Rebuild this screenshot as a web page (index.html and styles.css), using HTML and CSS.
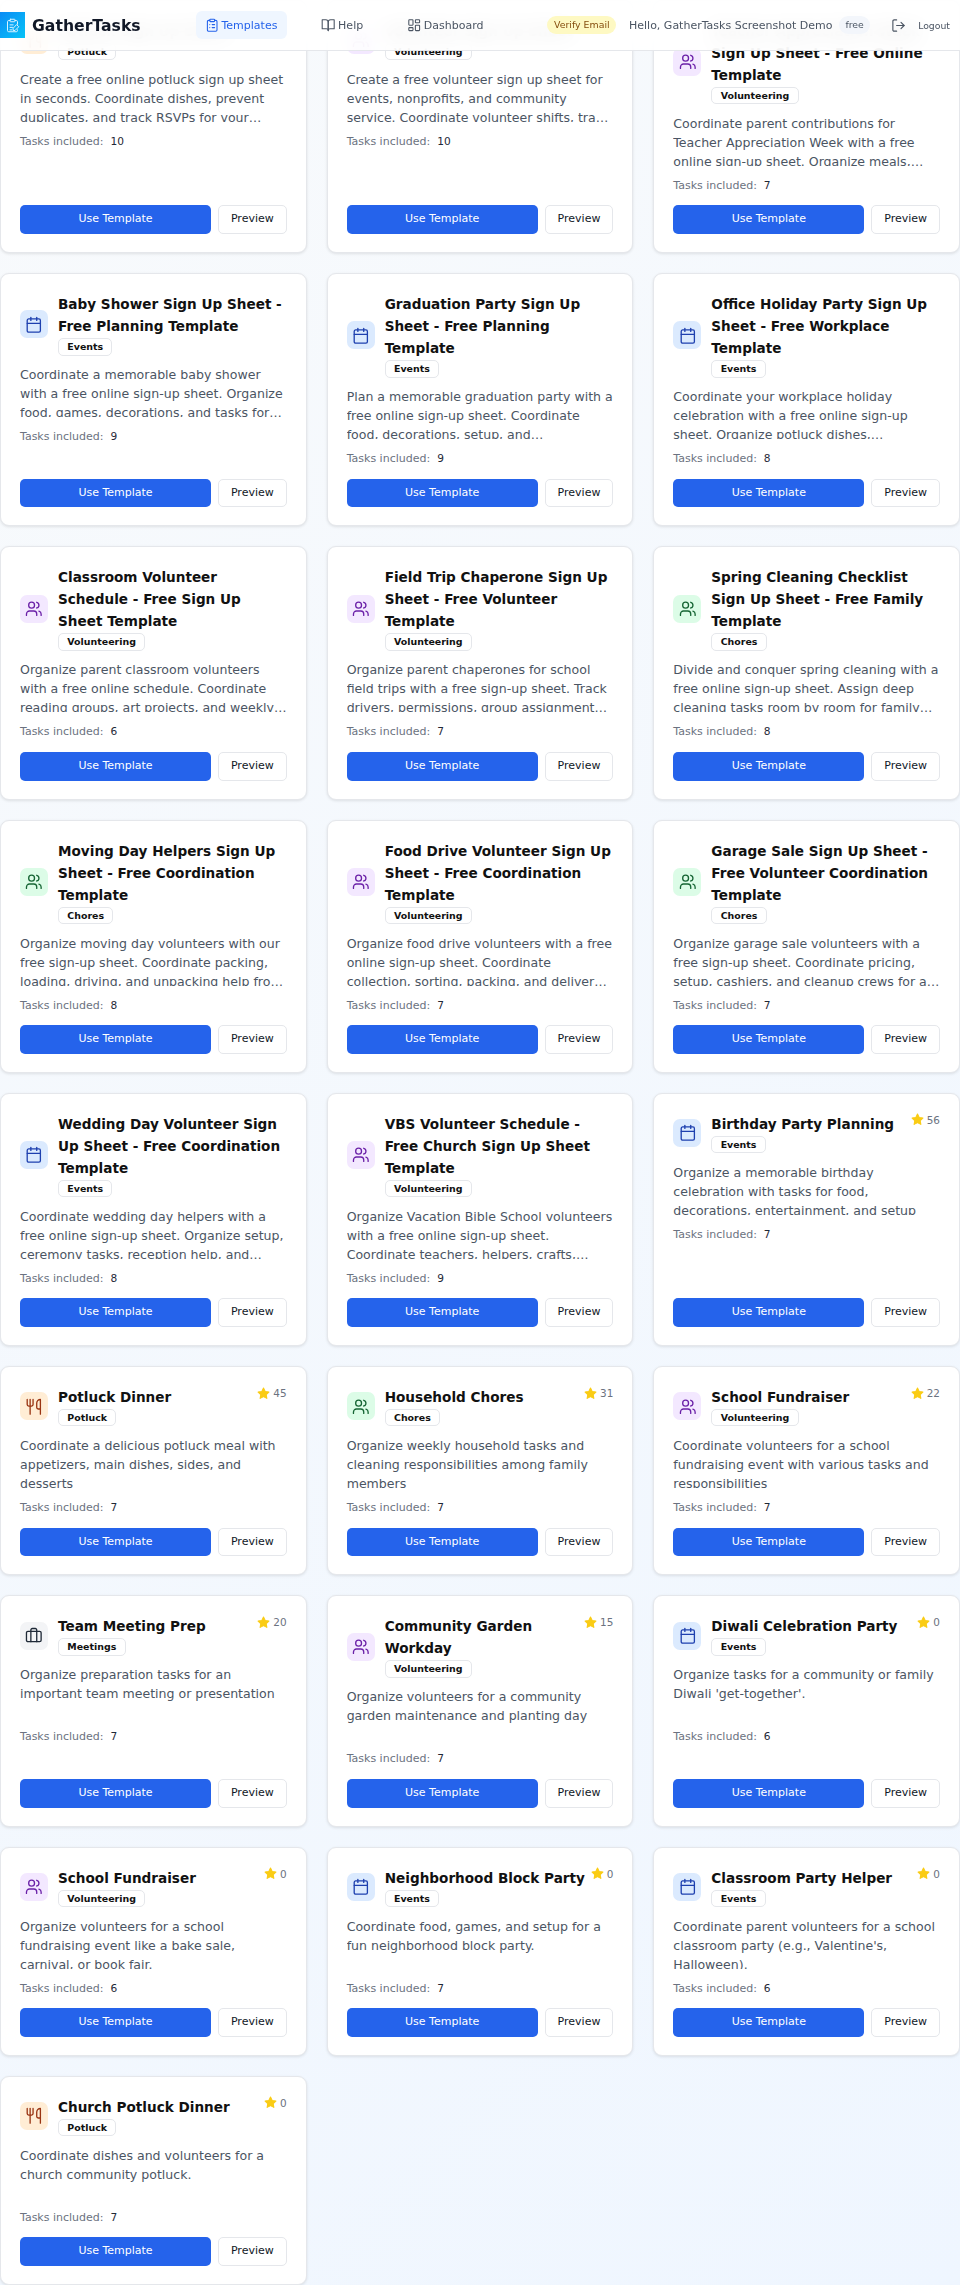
FILE: index.html
```html
<!DOCTYPE html>
<html>
<head>
    <meta charset="UTF-8">
    <title>GatherTasks Templates</title>
    <link rel="stylesheet" href="styles.css">
</head>
<body>
<svg class="defs" width="0" height="0">
    <symbol id="i-clipboard" viewBox="0 0 24 24"><rect width="8" height="4" x="8" y="2" rx="1"/><path d="M16 4h2a2 2 0 0 1 2 2v14a2 2 0 0 1-2 2H6a2 2 0 0 1-2-2V6a2 2 0 0 1 2-2h2"/><path d="M12 11h4"/><path d="M12 16h4"/><path d="M8 11h.01"/><path d="M8 16h.01"/></symbol>
    <symbol id="i-book" viewBox="0 0 24 24"><path d="M2 3h6a4 4 0 0 1 4 4v14a3 3 0 0 0-3-3H2z"/><path d="M22 3h-6a4 4 0 0 0-4 4v14a3 3 0 0 1 3-3h7z"/></symbol>
    <symbol id="i-dash" viewBox="0 0 24 24"><rect width="7" height="9" x="3" y="3" rx="1"/><rect width="7" height="5" x="14" y="3" rx="1"/><rect width="7" height="9" x="14" y="12" rx="1"/><rect width="7" height="5" x="3" y="16" rx="1"/></symbol>
    <symbol id="i-logout" viewBox="0 0 24 24"><path d="M9 21H5a2 2 0 0 1-2-2V5a2 2 0 0 1 2-2h4"/><polyline points="16 17 21 12 16 7"/><line x1="21" x2="9" y1="12" y2="12"/></symbol>
    <symbol id="i-calendar" viewBox="0 0 24 24"><path d="M8 2v4"/><path d="M16 2v4"/><rect width="18" height="18" x="3" y="4" rx="2"/><path d="M3 10h18"/></symbol>
    <symbol id="i-users" viewBox="0 0 24 24"><path d="M16 21v-2a4 4 0 0 0-4-4H6a4 4 0 0 0-4 4v2"/><circle cx="9" cy="7" r="4"/><path d="M22 21v-2a4 4 0 0 0-3-3.87"/><path d="M16 3.13a4 4 0 0 1 0 7.75"/></symbol>
    <symbol id="i-utensils" viewBox="0 0 24 24"><path d="M3 2v7c0 1.1.9 2 2 2h4a2 2 0 0 0 2-2V2"/><path d="M7 2v20"/><path d="M21 15V2a5 5 0 0 0-5 5v6c0 1.1.9 2 2 2h3Zm0 0v7"/></symbol>
    <symbol id="i-briefcase" viewBox="0 0 24 24"><path d="M16 20V4a2 2 0 0 0-2-2h-4a2 2 0 0 0-2 2v16"/><rect width="20" height="14" x="2" y="6" rx="2"/></symbol>
    <symbol id="i-star" viewBox="0 0 24 24"><polygon points="12 2 15.09 8.26 22 9.27 17 14.14 18.18 21.02 12 17.77 5.82 21.02 7 14.14 2 9.27 8.91 8.26 12 2"/></symbol>
</svg>

<header class="topbar">
    <a class="brand" href="#">
        <span class="brandMark">
            <svg viewBox="0 0 24 24"><rect x="8" y="2" width="8" height="4" rx="1"/><path d="M16 4h2a2 2 0 0 1 2 2v4"/><path d="M8 4H6a2 2 0 0 0-2 2v14a2 2 0 0 0 2 2h12a2 2 0 0 0 2-2v-1"/><path d="M8 11h5"/><path d="M8 15h4"/><path d="M8 19h3"/><path d="M19 11l3 3-6 6h-3v-3z"/></svg>
        </span>
        <span class="brandName">GatherTasks</span>
    </a>
    <nav class="nav">
        <a class="navLink active" href="#"><svg class="icon"><use href="#i-clipboard"/></svg>Templates</a>
        <a class="navLink" href="#"><svg class="icon"><use href="#i-book"/></svg>Help</a>
        <a class="navLink" href="#"><svg class="icon"><use href="#i-dash"/></svg>Dashboard</a>
    </nav>
    <div class="account">
        <a class="verify" href="#">Verify Email</a>
        <span class="hello">Hello, GatherTasks Screenshot Demo</span>
        <span class="plan">free</span>
        <a class="logout" href="#"><svg class="icon"><use href="#i-logout"/></svg><span>Logout</span></a>
    </div>
</header>

<main class="grid">
    <article class="card">
        <div class="cardHead">
            <span class="cardIcon potluck"><svg class="icon"><use href="#i-utensils"/></svg></span>
            <div class="cardTitle"><h3>Potluck Sign Up Sheet</h3><span class="tag">Potluck</span></div>
        </div>
        <p class="desc">Create a free online potluck sign up sheet in seconds. Coordinate dishes, prevent duplicates, and track RSVPs for your potluck dinner or community meal event today.</p>
        <p class="count">Tasks included: <b>10</b></p>
        <div class="actions"><a class="useBtn" href="#">Use Template</a><a class="previewBtn" href="#">Preview</a></div>
    </article>
    <article class="card">
        <div class="cardHead">
            <span class="cardIcon volunteer"><svg class="icon"><use href="#i-users"/></svg></span>
            <div class="cardTitle"><h3>Volunteer Sign Up Sheet</h3><span class="tag">Volunteering</span></div>
        </div>
        <p class="desc">Create a free volunteer sign up sheet for events, nonprofits, and community service. Coordinate volunteer shifts, track hours, and send reminders to your whole team.</p>
        <p class="count">Tasks included: <b>10</b></p>
        <div class="actions"><a class="useBtn" href="#">Use Template</a><a class="previewBtn" href="#">Preview</a></div>
    </article>
    <article class="card">
        <div class="cardHead">
            <span class="cardIcon volunteer"><svg class="icon"><use href="#i-users"/></svg></span>
            <div class="cardTitle"><h3>Teacher Appreciation Week Sign Up Sheet - Free Online Template</h3><span class="tag">Volunteering</span></div>
        </div>
        <p class="desc">Coordinate parent contributions for Teacher Appreciation Week with a free online sign-up sheet. Organize meals, classroom help, gifts, and thank-you notes for teachers.</p>
        <p class="count">Tasks included: <b>7</b></p>
        <div class="actions"><a class="useBtn" href="#">Use Template</a><a class="previewBtn" href="#">Preview</a></div>
    </article>

    <article class="card">
        <div class="cardHead">
            <span class="cardIcon events"><svg class="icon"><use href="#i-calendar"/></svg></span>
            <div class="cardTitle"><h3>Baby Shower Sign Up Sheet - Free Planning Template</h3><span class="tag">Events</span></div>
        </div>
        <p class="desc">Coordinate a memorable baby shower with a free online sign-up sheet. Organize food, games, decorations, and tasks for your guests and hosts with ease today.</p>
        <p class="count">Tasks included: <b>9</b></p>
        <div class="actions"><a class="useBtn" href="#">Use Template</a><a class="previewBtn" href="#">Preview</a></div>
    </article>
    <article class="card">
        <div class="cardHead">
            <span class="cardIcon events"><svg class="icon"><use href="#i-calendar"/></svg></span>
            <div class="cardTitle"><h3>Graduation Party Sign Up Sheet - Free Planning Template</h3><span class="tag">Events</span></div>
        </div>
        <p class="desc">Plan a memorable graduation party with a free online sign-up sheet. Coordinate food, decorations, setup, and entertainment with family and friends for the big day.</p>
        <p class="count">Tasks included: <b>9</b></p>
        <div class="actions"><a class="useBtn" href="#">Use Template</a><a class="previewBtn" href="#">Preview</a></div>
    </article>
    <article class="card">
        <div class="cardHead">
            <span class="cardIcon events"><svg class="icon"><use href="#i-calendar"/></svg></span>
            <div class="cardTitle"><h3>Office Holiday Party Sign Up Sheet - Free Workplace Template</h3><span class="tag">Events</span></div>
        </div>
        <p class="desc">Coordinate your workplace holiday celebration with a free online sign-up sheet. Organize potluck dishes, decorations, gift exchanges, and setup for the team.</p>
        <p class="count">Tasks included: <b>8</b></p>
        <div class="actions"><a class="useBtn" href="#">Use Template</a><a class="previewBtn" href="#">Preview</a></div>
    </article>

    <article class="card">
        <div class="cardHead">
            <span class="cardIcon volunteer"><svg class="icon"><use href="#i-users"/></svg></span>
            <div class="cardTitle"><h3>Classroom Volunteer Schedule - Free Sign Up Sheet Template</h3><span class="tag">Volunteering</span></div>
        </div>
        <p class="desc">Organize parent classroom volunteers with a free online schedule. Coordinate reading groups, art projects, and weekly classroom help for the whole school year.</p>
        <p class="count">Tasks included: <b>6</b></p>
        <div class="actions"><a class="useBtn" href="#">Use Template</a><a class="previewBtn" href="#">Preview</a></div>
    </article>
    <article class="card">
        <div class="cardHead">
            <span class="cardIcon volunteer"><svg class="icon"><use href="#i-users"/></svg></span>
            <div class="cardTitle"><h3>Field Trip Chaperone Sign Up Sheet - Free Volunteer Template</h3><span class="tag">Volunteering</span></div>
        </div>
        <p class="desc">Organize parent chaperones for school field trips with a free sign-up sheet. Track drivers, permissions, group assignments, and lunches for the whole class.</p>
        <p class="count">Tasks included: <b>7</b></p>
        <div class="actions"><a class="useBtn" href="#">Use Template</a><a class="previewBtn" href="#">Preview</a></div>
    </article>
    <article class="card">
        <div class="cardHead">
            <span class="cardIcon chores"><svg class="icon"><use href="#i-users"/></svg></span>
            <div class="cardTitle"><h3>Spring Cleaning Checklist Sign Up Sheet - Free Family Template</h3><span class="tag">Chores</span></div>
        </div>
        <p class="desc">Divide and conquer spring cleaning with a free online sign-up sheet. Assign deep cleaning tasks room by room for family members and housemates this season.</p>
        <p class="count">Tasks included: <b>8</b></p>
        <div class="actions"><a class="useBtn" href="#">Use Template</a><a class="previewBtn" href="#">Preview</a></div>
    </article>

    <article class="card">
        <div class="cardHead">
            <span class="cardIcon chores"><svg class="icon"><use href="#i-users"/></svg></span>
            <div class="cardTitle"><h3>Moving Day Helpers Sign Up Sheet - Free Coordination Template</h3><span class="tag">Chores</span></div>
        </div>
        <p class="desc">Organize moving day volunteers with our free sign-up sheet. Coordinate packing, loading, driving, and unpacking help from friends and family on the big day.</p>
        <p class="count">Tasks included: <b>8</b></p>
        <div class="actions"><a class="useBtn" href="#">Use Template</a><a class="previewBtn" href="#">Preview</a></div>
    </article>
    <article class="card">
        <div class="cardHead">
            <span class="cardIcon volunteer"><svg class="icon"><use href="#i-users"/></svg></span>
            <div class="cardTitle"><h3>Food Drive Volunteer Sign Up Sheet - Free Coordination Template</h3><span class="tag">Volunteering</span></div>
        </div>
        <p class="desc">Organize food drive volunteers with a free online sign-up sheet. Coordinate collection, sorting, packing, and delivery shifts for your community pantry today.</p>
        <p class="count">Tasks included: <b>7</b></p>
        <div class="actions"><a class="useBtn" href="#">Use Template</a><a class="previewBtn" href="#">Preview</a></div>
    </article>
    <article class="card">
        <div class="cardHead">
            <span class="cardIcon chores"><svg class="icon"><use href="#i-users"/></svg></span>
            <div class="cardTitle"><h3>Garage Sale Sign Up Sheet - Free Volunteer Coordination Template</h3><span class="tag">Chores</span></div>
        </div>
        <p class="desc">Organize garage sale volunteers with a free sign-up sheet. Coordinate pricing, setup, cashiers, and cleanup crews for a smooth and successful weekend sale.</p>
        <p class="count">Tasks included: <b>7</b></p>
        <div class="actions"><a class="useBtn" href="#">Use Template</a><a class="previewBtn" href="#">Preview</a></div>
    </article>

    <article class="card">
        <div class="cardHead">
            <span class="cardIcon events"><svg class="icon"><use href="#i-calendar"/></svg></span>
            <div class="cardTitle"><h3>Wedding Day Volunteer Sign Up Sheet - Free Coordination Template</h3><span class="tag">Events</span></div>
        </div>
        <p class="desc">Coordinate wedding day helpers with a free online sign-up sheet. Organize setup, ceremony tasks, reception help, and transportation with family and friends.</p>
        <p class="count">Tasks included: <b>8</b></p>
        <div class="actions"><a class="useBtn" href="#">Use Template</a><a class="previewBtn" href="#">Preview</a></div>
    </article>
    <article class="card">
        <div class="cardHead">
            <span class="cardIcon volunteer"><svg class="icon"><use href="#i-users"/></svg></span>
            <div class="cardTitle"><h3>VBS Volunteer Schedule - Free Church Sign Up Sheet Template</h3><span class="tag">Volunteering</span></div>
        </div>
        <p class="desc">Organize Vacation Bible School volunteers with a free online sign-up sheet. Coordinate teachers, helpers, crafts, refreshments, and games for the whole week.</p>
        <p class="count">Tasks included: <b>9</b></p>
        <div class="actions"><a class="useBtn" href="#">Use Template</a><a class="previewBtn" href="#">Preview</a></div>
    </article>
    <article class="card">
        <div class="cardHead">
            <span class="cardIcon events"><svg class="icon"><use href="#i-calendar"/></svg></span>
            <div class="cardTitle"><h3>Birthday Party Planning</h3><span class="tag">Events</span></div>
            <span class="rating"><svg><use href="#i-star"/></svg>56</span>
        </div>
        <p class="desc">Organize a memorable birthday celebration with tasks for food, decorations, entertainment, and setup</p>
        <p class="count">Tasks included: <b>7</b></p>
        <div class="actions"><a class="useBtn" href="#">Use Template</a><a class="previewBtn" href="#">Preview</a></div>
    </article>

    <article class="card">
        <div class="cardHead">
            <span class="cardIcon potluck"><svg class="icon"><use href="#i-utensils"/></svg></span>
            <div class="cardTitle"><h3>Potluck Dinner</h3><span class="tag">Potluck</span></div>
            <span class="rating"><svg><use href="#i-star"/></svg>45</span>
        </div>
        <p class="desc">Coordinate a delicious potluck meal with appetizers, main dishes, sides, and desserts</p>
        <p class="count">Tasks included: <b>7</b></p>
        <div class="actions"><a class="useBtn" href="#">Use Template</a><a class="previewBtn" href="#">Preview</a></div>
    </article>
    <article class="card">
        <div class="cardHead">
            <span class="cardIcon chores"><svg class="icon"><use href="#i-users"/></svg></span>
            <div class="cardTitle"><h3>Household Chores</h3><span class="tag">Chores</span></div>
            <span class="rating"><svg><use href="#i-star"/></svg>31</span>
        </div>
        <p class="desc">Organize weekly household tasks and cleaning responsibilities among family members</p>
        <p class="count">Tasks included: <b>7</b></p>
        <div class="actions"><a class="useBtn" href="#">Use Template</a><a class="previewBtn" href="#">Preview</a></div>
    </article>
    <article class="card">
        <div class="cardHead">
            <span class="cardIcon volunteer"><svg class="icon"><use href="#i-users"/></svg></span>
            <div class="cardTitle"><h3>School Fundraiser</h3><span class="tag">Volunteering</span></div>
            <span class="rating"><svg><use href="#i-star"/></svg>22</span>
        </div>
        <p class="desc">Coordinate volunteers for a school fundraising event with various tasks and responsibilities</p>
        <p class="count">Tasks included: <b>7</b></p>
        <div class="actions"><a class="useBtn" href="#">Use Template</a><a class="previewBtn" href="#">Preview</a></div>
    </article>

    <article class="card">
        <div class="cardHead">
            <span class="cardIcon meetings"><svg class="icon"><use href="#i-briefcase"/></svg></span>
            <div class="cardTitle"><h3>Team Meeting Prep</h3><span class="tag">Meetings</span></div>
            <span class="rating"><svg><use href="#i-star"/></svg>20</span>
        </div>
        <p class="desc">Organize preparation tasks for an important team meeting or presentation</p>
        <p class="count">Tasks included: <b>7</b></p>
        <div class="actions"><a class="useBtn" href="#">Use Template</a><a class="previewBtn" href="#">Preview</a></div>
    </article>
    <article class="card">
        <div class="cardHead">
            <span class="cardIcon volunteer"><svg class="icon"><use href="#i-users"/></svg></span>
            <div class="cardTitle"><h3>Community Garden Workday</h3><span class="tag">Volunteering</span></div>
            <span class="rating"><svg><use href="#i-star"/></svg>15</span>
        </div>
        <p class="desc">Organize volunteers for a community garden maintenance and planting day</p>
        <p class="count">Tasks included: <b>7</b></p>
        <div class="actions"><a class="useBtn" href="#">Use Template</a><a class="previewBtn" href="#">Preview</a></div>
    </article>
    <article class="card">
        <div class="cardHead">
            <span class="cardIcon events"><svg class="icon"><use href="#i-calendar"/></svg></span>
            <div class="cardTitle"><h3>Diwali Celebration Party</h3><span class="tag">Events</span></div>
            <span class="rating"><svg><use href="#i-star"/></svg>0</span>
        </div>
        <p class="desc">Organize tasks for a community or family Diwali 'get-together'.</p>
        <p class="count">Tasks included: <b>6</b></p>
        <div class="actions"><a class="useBtn" href="#">Use Template</a><a class="previewBtn" href="#">Preview</a></div>
    </article>

    <article class="card">
        <div class="cardHead">
            <span class="cardIcon volunteer"><svg class="icon"><use href="#i-users"/></svg></span>
            <div class="cardTitle"><h3>School Fundraiser</h3><span class="tag">Volunteering</span></div>
            <span class="rating"><svg><use href="#i-star"/></svg>0</span>
        </div>
        <p class="desc">Organize volunteers for a school fundraising event like a bake sale, carnival, or book fair.</p>
        <p class="count">Tasks included: <b>6</b></p>
        <div class="actions"><a class="useBtn" href="#">Use Template</a><a class="previewBtn" href="#">Preview</a></div>
    </article>
    <article class="card">
        <div class="cardHead">
            <span class="cardIcon events"><svg class="icon"><use href="#i-calendar"/></svg></span>
            <div class="cardTitle"><h3>Neighborhood Block Party</h3><span class="tag">Events</span></div>
            <span class="rating"><svg><use href="#i-star"/></svg>0</span>
        </div>
        <p class="desc">Coordinate food, games, and setup for a fun neighborhood block party.</p>
        <p class="count">Tasks included: <b>7</b></p>
        <div class="actions"><a class="useBtn" href="#">Use Template</a><a class="previewBtn" href="#">Preview</a></div>
    </article>
    <article class="card">
        <div class="cardHead">
            <span class="cardIcon events"><svg class="icon"><use href="#i-calendar"/></svg></span>
            <div class="cardTitle"><h3>Classroom Party Helper</h3><span class="tag">Events</span></div>
            <span class="rating"><svg><use href="#i-star"/></svg>0</span>
        </div>
        <p class="desc">Coordinate parent volunteers for a school classroom party (e.g., Valentine's, Halloween).</p>
        <p class="count">Tasks included: <b>6</b></p>
        <div class="actions"><a class="useBtn" href="#">Use Template</a><a class="previewBtn" href="#">Preview</a></div>
    </article>

    <article class="card">
        <div class="cardHead">
            <span class="cardIcon potluck"><svg class="icon"><use href="#i-utensils"/></svg></span>
            <div class="cardTitle"><h3>Church Potluck Dinner</h3><span class="tag">Potluck</span></div>
            <span class="rating"><svg><use href="#i-star"/></svg>0</span>
        </div>
        <p class="desc">Coordinate dishes and volunteers for a church community potluck.</p>
        <p class="count">Tasks included: <b>7</b></p>
        <div class="actions"><a class="useBtn" href="#">Use Template</a><a class="previewBtn" href="#">Preview</a></div>
    </article>
</main>
</body>
</html>
```
FILE: styles.css
```css
* {
    margin: 0;
    padding: 0;
    box-sizing: border-box;
}

body {
    font-family: "DejaVu Sans", sans-serif;
    background: linear-gradient(135deg, #f8fafc, #eff6ff);
    color: #111827;
}

a {
    text-decoration: none;
    color: inherit;
}

.defs {
    position: absolute;
}

.icon {
    width: 14.4px;
    height: 14.4px;
    fill: none;
    stroke: currentColor;
    stroke-width: 1.8;
    stroke-linecap: round;
    stroke-linejoin: round;
    flex: none;
}

/* top bar sits over the scrolled list */
.topbar {
    position: fixed;
    top: 0;
    left: 0;
    right: 0;
    height: 51px;
    z-index: 10;
    display: flex;
    align-items: center;
    background: rgba(255, 255, 255, 0.9);
    backdrop-filter: blur(10px);
    border-bottom: 1px solid #e5e7eb;
}

.brand {
    display: flex;
    align-items: center;
    gap: 6.7px;
    width: 196px;
    flex: none;
}

.brandMark {
    width: 25.3px;
    height: 25.6px;
    display: flex;
    align-items: center;
    justify-content: center;
    background: linear-gradient(135deg, #0b8cf5, #06c3f7);
}

.brandMark svg {
    width: 15px;
    height: 15px;
    fill: none;
    stroke: #d9f3ff;
    stroke-width: 1.6;
    stroke-linecap: round;
    stroke-linejoin: round;
}

.brandName {
    font-size: 15.66px;
    font-weight: 700;
    color: #111827;
}

.nav {
    display: flex;
    align-items: center;
    gap: 25.3px;
}

.navLink {
    display: flex;
    align-items: center;
    gap: 2.6px;
    height: 28px;
    padding: 0 9.9px 0 8.5px;
    border-radius: 6px;
    font-size: 11px;
    color: #4b5563;
}

.navLink.active {
    background: #eff6ff;
    color: #2563eb;
}

.account {
    margin-left: auto;
    margin-right: 10px;
    display: flex;
    align-items: center;
}

.verify {
    padding: 0 6.7px;
    height: 18.6px;
    line-height: 18.6px;
    border-radius: 10px;
    background: #fef9c3;
    color: #854d0e;
    font-size: 9.4px;
}

.hello {
    margin-left: 12.7px;
    font-size: 11px;
    color: #4b5563;
}

.plan {
    margin-left: 7px;
    padding: 0 6px;
    height: 18.6px;
    line-height: 18.6px;
    border-radius: 10px;
    background: #f3f6fb;
    color: #4b5563;
    font-size: 9.3px;
}

.logout {
    margin-left: 21.4px;
    display: flex;
    align-items: center;
    gap: 12px;
    font-size: 9.3px;
    color: #4b5563;
}

.logout .icon {
    width: 15px;
    height: 15px;
}

/* template cards */
.grid {
    display: grid;
    grid-template-columns: repeat(3, 1fr);
    gap: 20px;
}

.card {
    display: flex;
    flex-direction: column;
    padding: 19px 19px 18.1px;
    background: #fff;
    border: 1px solid #e5e7eb;
    border-radius: 9px;
    box-shadow: 0 1px 3px rgba(0, 0, 0, 0.1);
}

.cardHead {
    display: flex;
    align-items: center;
    gap: 10px;
}

.cardIcon {
    width: 28px;
    height: 28px;
    border-radius: 7px;
    display: flex;
    align-items: center;
    justify-content: center;
    flex: none;
}

.cardIcon .icon {
    width: 17.6px;
    height: 17.6px;
}

.cardIcon.events {
    background: #dbeafe;
    color: #1e40af;
}

.cardIcon.volunteer {
    background: #f3e8ff;
    color: #6b21a8;
}

.cardIcon.chores {
    background: #dcfce7;
    color: #166534;
}

.cardIcon.potluck {
    background: #ffedd5;
    color: #9a3412;
}

.cardIcon.meetings {
    background: #f3f4f6;
    color: #1f2937;
}

.cardTitle {
    flex: 1;
    min-width: 0;
    display: flex;
    flex-direction: column;
    align-items: flex-start;
    gap: 1px;
}

.cardTitle h3 {
    font-size: 13.6px;
    line-height: 22px;
    font-weight: 700;
    color: #111;
}

.tag {
    padding: 0 8.3px;
    height: 17.3px;
    line-height: 15.3px;
    border: 1px solid #e5e7eb;
    border-radius: 5px;
    font-size: 9.45px;
    font-weight: 700;
    color: #111;
}

.rating {
    align-self: flex-start;
    display: flex;
    align-items: center;
    gap: 3px;
    height: 14px;
    margin-left: -6px;
    font-size: 10.45px;
    color: #6b7280;
}

.rating svg {
    width: 13px;
    height: 13px;
    fill: #facc15;
    stroke: #facc15;
    stroke-width: 2;
    stroke-linejoin: round;
}

.desc {
    margin-top: 9.7px;
    height: 52px;
    overflow: hidden;
    font-size: 12.55px;
    line-height: 19px;
    color: #4b5563;
    display: -webkit-box;
    -webkit-box-orient: vertical;
    -webkit-line-clamp: 3;
}

.count {
    margin-top: 11px;
    display: flex;
    gap: 7px;
    font-size: 11px;
    line-height: 17px;
    color: #6b7280;
}

.count b {
    font-size: 10.6px;
    font-weight: 400;
    color: #1f2937;
}

.actions {
    margin-top: auto;
    padding-top: 11.5px;
    display: flex;
    gap: 7px;
}

.useBtn,
.previewBtn {
    height: 28.67px;
    line-height: 28.67px;
    text-align: center;
    font-size: 11px;
    border-radius: 5px;
}

.useBtn {
    flex: 1;
    background: #2563eb;
    color: #fff;
}

.previewBtn {
    width: 68.67px;
    line-height: 26.67px;
    background: #fff;
    border: 1px solid #e5e7eb;
    color: #111827;
}
```
